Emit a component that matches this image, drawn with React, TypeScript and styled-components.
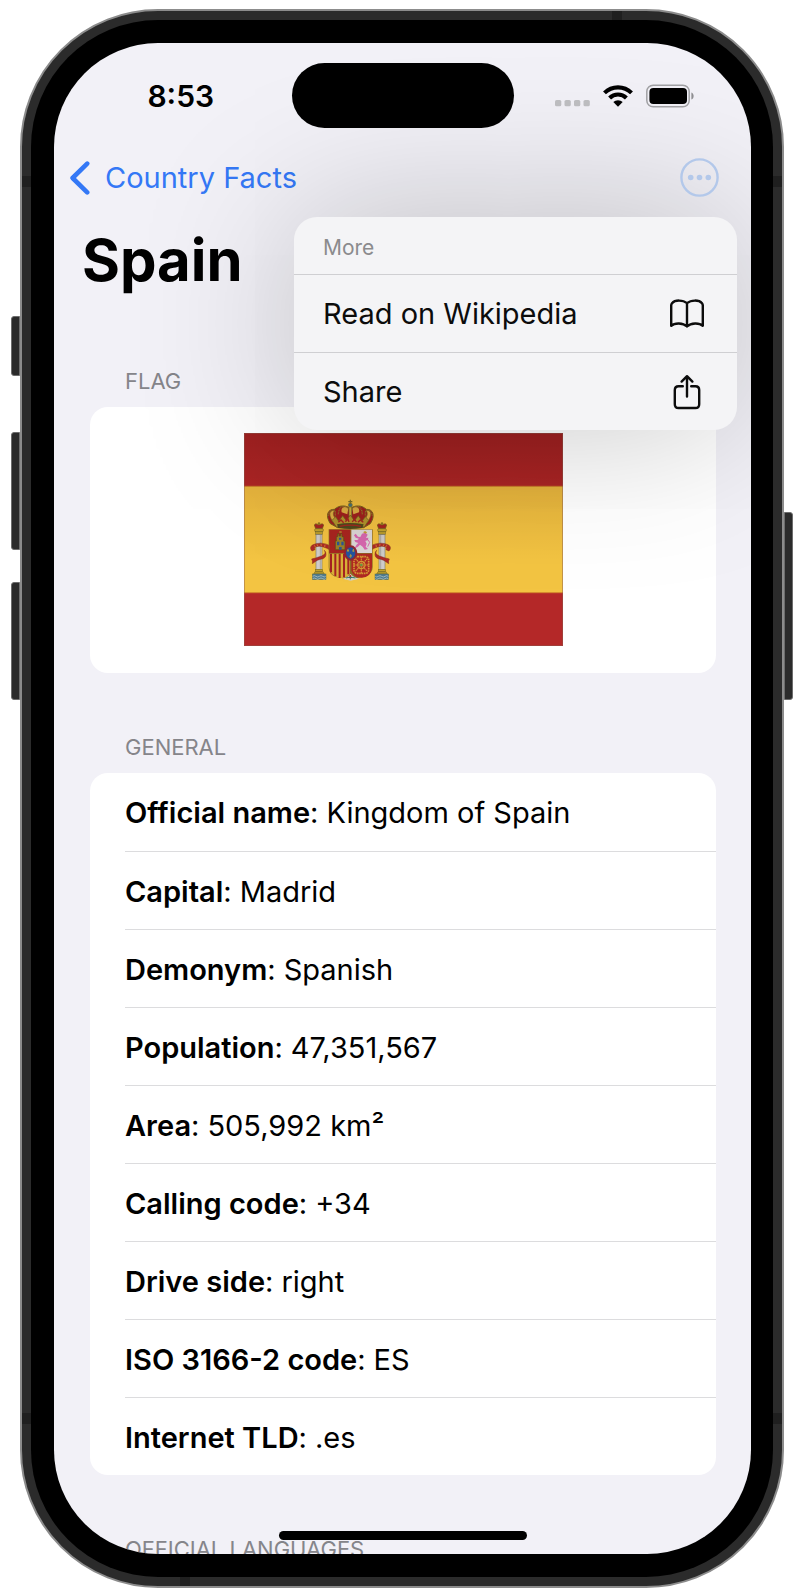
import React from 'react';
import styled, { createGlobalStyle, css } from 'styled-components';

const GlobalStyle = createGlobalStyle`
  *, *::before, *::after { box-sizing: border-box; }
  body {
    margin: 0;
    background: #ffffff;
    color: #000000;
    font-family: Inter, "Liberation Sans", sans-serif;
    font-size: 29px;
    line-height: 38px;
  }
`;

/* ---------- device ---------- */

const Page = styled.main`
  display: grid;
  grid-template-columns: 9px minmax(0, 1fr) 9px;
  padding: 9px 11px 4px;
`;

const Rail = styled.div<{ $side: 'left' | 'right' }>`
  display: flex;
  flex-direction: column;
  align-items: ${p => (p.$side === 'left' ? 'flex-end' : 'flex-start')};
`;

const HardwareKey = styled.span<{ $gap: number; $length: number; $side: 'left' | 'right' }>`
  width: 9px;
  height: ${p => p.$length}px;
  margin-top: ${p => p.$gap}px;
  background: #2b2b2b;
  border: 1px solid #6d6d6d;
  border-radius: ${p => (p.$side === 'left' ? '3px 0 0 3px' : '0 3px 3px 0')};
`;

const Chassis = styled.div`
  position: relative;
  border: 2px solid #8c8c8c;
  border-radius: 138px;
  background: #2b2b2b;
  padding: 9px;
`;

const Bezel = styled.div`
  border-radius: 127px;
  background: #000000;
  padding: 23px 22px 23px 23px;
`;

const Antenna = styled.span<{ $edge: 'left' | 'right' | 'top' | 'bottom'; $at: string }>`
  position: absolute;
  background: #1f1f1f;
  ${p =>
    p.$edge === 'left' || p.$edge === 'right'
      ? css`
          width: 9px;
          height: 11px;
          top: ${p.$at};
        `
      : css`
          width: 10px;
          height: 9px;
          left: ${p.$at};
        `}
  ${p => p.$edge}: 0;
`;

const Screen = styled.div`
  position: relative;
  overflow: hidden;
  border-radius: 104px;
  background: #f2f1f7;
`;

/* ---------- top bars ---------- */

const StatusBar = styled.header`
  display: grid;
  grid-template-columns: minmax(0, 1fr) 222px minmax(0, 1fr);
  align-items: center;
  height: 105px;
`;

const Clock = styled.time`
  position: relative;
  z-index: 3;
  padding-left: 16px;
  text-align: center;
  font-size: 30px;
  font-weight: 600;
`;

const Island = styled.div`
  position: relative;
  z-index: 3;
  height: 65px;
  border-radius: 33px;
  background: #000000;
`;

const StatusIcons = styled.div`
  position: relative;
  z-index: 3;
  display: flex;
  justify-content: flex-end;
  align-items: center;
  gap: 13px;
  padding-right: 57px;
`;

const NavBar = styled.nav`
  position: relative;
  display: flex;
  align-items: center;
  justify-content: space-between;
  height: 59px;
  padding: 0 32px 0 16px;
`;

const BackLink = styled.a`
  position: relative;
  display: flex;
  align-items: center;
  gap: 15px;
  color: #3478f6;
  text-decoration: none;
`;

const MoreButton = styled.button`
  position: relative;
  z-index: 3;
  display: flex;
  padding: 0;
  border: 0;
  background: none;
  color: #b3c8ea;
`;

/* ---------- menu ---------- */

const Menu = styled.div`
  position: absolute;
  z-index: 2;
  top: 69px;
  right: 14px;
  width: 443px;
  border-radius: 23px;
  background: #f4f4f6;
  box-shadow: 0 0 160px rgba(0, 0, 0, 0.22);
`;

const MenuHeading = styled.div`
  padding: 15px 29px 10px;
  color: #8b8b8d;
  font-size: 21px;
  line-height: 32px;
`;

const MenuItem = styled.button`
  display: flex;
  align-items: center;
  justify-content: space-between;
  width: 100%;
  height: 78px;
  padding: 0 29px;
  border: 0;
  border-top: 1px solid #cfcfd2;
  background: none;
  color: #0c0c0c;
  font: inherit;
  text-align: left;
`;

/* ---------- content ---------- */

const Title = styled.h1`
  margin: 0;
  padding: 17px 28px 11px;
  font-size: 58px;
  line-height: 72px;
  font-weight: 700;
`;

const Section = styled.section`
  padding: 0 35px 0 36px;
`;

const SectionHeading = styled.h2`
  margin: 0;
  padding: 60px 35px 12px;
  color: #85858a;
  font-size: 22px;
  line-height: 28px;
  font-weight: 400;
`;

const Card = styled.div`
  overflow: hidden;
  border-radius: 18px;
  background: #ffffff;
`;

const FlagCard = styled(Card)`
  display: flex;
  justify-content: center;
  padding: 26px 0 27px;
`;

const FactList = styled.dl`
  margin: 0;
  padding-left: 35px;
`;

const Fact = styled.div`
  display: flex;
  align-items: center;
  height: 78px;
  padding-top: 2px;
  & + & { border-top: 1px solid #dcdcde; }
`;

const Term = styled.dt`
  font-weight: 600;
  &::after { content: ":"; font-weight: 400; }
`;

const Detail = styled.dd`
  margin: 0 0 0 8px;
`;

const Peek = styled(Section)`
  height: 79px;
  overflow: hidden;
`;

const HomeIndicator = styled.span`
  position: absolute;
  bottom: 14px;
  left: 50%;
  width: 248px;
  height: 9px;
  border-radius: 5px;
  background: #000000;
  transform: translateX(-50%);
`;

/* ---------- drawings ---------- */

const CellularIcon = () => (
  <svg width="35" height="36" viewBox="0 0 35 36" fill="#bcbcbf" aria-hidden="true">
    {[0, 9.5, 19, 28.5].map(x => (
      <rect key={x} x={x} y="22" width="6.3" height="6.3" rx="1.6" />
    ))}
  </svg>
);

const WifiIcon = () => (
  <svg width="30" height="22" viewBox="0 0 30 22" aria-hidden="true">
    <g fill="none" stroke="#000" strokeWidth="4.1">
      <path d="M1.5 7.9A19.2 19.2 0 0 1 28.5 7.9" />
      <path d="M6.6 13A12 12 0 0 1 23.4 13" />
    </g>
    <path d="M15 21.8L10.3 17.1A6.6 6.6 0 0 1 19.7 17.1Z" />
  </svg>
);

const BatteryIcon = () => (
  <svg width="48" height="24" viewBox="0 0 48 24" aria-hidden="true">
    <rect x=".8" y="1.2" width="42.4" height="21.6" rx="6.4" fill="none" stroke="#a0a0a3" strokeWidth="1.5" />
    <rect x="3.4" y="4" width="37.6" height="16" rx="4" />
    <path d="M45.4 8.4c3 1.2 3 6 0 7.2z" fill="#8e8e91" />
  </svg>
);

const ChevronIcon = () => (
  <svg width="20" height="34" viewBox="0 0 20 34" fill="none" stroke="currentColor" strokeWidth="4.6" strokeLinecap="round" strokeLinejoin="round" aria-hidden="true">
    <path d="M17.2 2.6L2.6 17L17.2 31.4" />
  </svg>
);

const EllipsisIcon = () => (
  <svg width="39" height="39" viewBox="0 0 39 39" aria-hidden="true">
    <circle cx="19.5" cy="19.5" r="18.1" fill="none" stroke="currentColor" strokeWidth="2.4" />
    <g fill="currentColor">
      <circle cx="10.7" cy="19.5" r="2.8" />
      <circle cx="19.5" cy="19.5" r="2.8" />
      <circle cx="28.3" cy="19.5" r="2.8" />
    </g>
  </svg>
);

const BookIcon = () => (
  <svg width="42" height="34" viewBox="0 0 42 34" fill="none" stroke="currentColor" strokeWidth="2.4" strokeLinecap="round" strokeLinejoin="round" aria-hidden="true">
    <path d="M21 6.2C17 2.8 9 2.6 6 6.2C5.4 7 5.2 7.4 5.2 8.4V28.8C8.6 25.6 17 25.6 21 29.4C25 25.6 33.4 25.6 36.8 28.8V8.4C36.8 7.4 36.6 7 36 6.2C33 2.6 25 2.8 21 6.2V29.4" />
  </svg>
);

const ShareIcon = () => (
  <svg width="42" height="36" viewBox="0 0 42 36" fill="none" stroke="currentColor" strokeWidth="2.4" strokeLinecap="round" strokeLinejoin="round" aria-hidden="true">
    <path d="M16.8 12.2H12.6Q8.8 12.2 8.8 16V30.2Q8.8 34 12.6 34H29.4Q33.2 34 33.2 30.2V16Q33.2 12.2 29.4 12.2H25.2" />
    <path d="M21 22.5V2.6M15.6 7.6L21 2.2L26.4 7.6" />
  </svg>
);

const Pillar = ({ x, mirror }: { x: number; mirror?: boolean }) => (
  <g transform={`translate(${x} 0)${mirror ? ' scale(-1 1)' : ''}`}>
    <path d="M-14 300L-10 296L0 300L10 296L14 300L10 311H-10Z" fill="#a62622" stroke="#6b5a1a" strokeWidth="2" />
    <circle cx="0" cy="296" r="4" fill="#8f7a22" />
    <rect x="-13" y="311" width="26" height="9" rx="3" fill="#c4a52d" stroke="#6b6425" strokeWidth="1.5" />
    <rect x="-10" y="320" width="20" height="9" fill="#b89c2c" stroke="#6b6425" strokeWidth="1.5" />
    <rect x="-9" y="329" width="18" height="104" fill="#cfcdca" stroke="#77756b" strokeWidth="1.8" />
    <path d="M4 330V432" stroke="#aaa8a3" strokeWidth="3" />
    <rect x="-11" y="433" width="22" height="7" fill="#c4a52d" stroke="#6b6425" strokeWidth="1.5" />
    <path d="M-16 447L-12 440H12L16 447Z" fill="#b89c2c" stroke="#6b6425" strokeWidth="1.5" />
    <rect x="-20" y="447" width="41" height="17" fill="#4d7b92" stroke="#5f6f4a" strokeWidth="1.5" />
    <path d="M-19 454Q-14 450 -9 454T1 454T11 454T20 454M-19 461Q-14 457 -9 461T1 461T11 461T20 461" fill="none" stroke="#c9d3c8" strokeWidth="2" />
    <path d="M34 362Q4 348 -20 360Q-30 368 -21 378L-12 374Q-16 368 -8 365Q8 360 33 375Z" fill="#b02a26" stroke="#7d2a1c" strokeWidth="1.5" />
    <path d="M16 376Q24 386 8 393Q-12 400 -22 402Q-18 408 -20 416Q-4 402 12 401Q24 396 20 382Z" fill="#b02a26" stroke="#7d2a1c" strokeWidth="1.5" />
    <path d="M-14 361L-10 367M-6 358L-3 364M6 357L7 363M18 359L17 366" stroke="#d8a53a" strokeWidth="2" />
  </g>
);

const CoatOfArms = () => (
  <g transform="translate(-13 -8) scale(.33333)">
    <Pillar x={264} />
    <Pillar x={453} mirror />

    <path d="M298 296C282 272 290 252 310 253C325 240 342 240 358 250C374 240 392 240 406 253C426 252 434 272 418 296L398 308H320Z" fill="#9f211e" stroke="#77671f" strokeWidth="3" />
    <path d="M307 292C288 266 298 254 311 256C302 268 310 280 323 287Z" fill="#ddb043" stroke="#77671f" strokeWidth="2" />
    <path d="M409 292C428 266 418 254 405 256C414 268 406 280 393 287Z" fill="#ddb043" stroke="#77671f" strokeWidth="2" />
    <path d="M332 262C328 246 342 242 352 250L349 268Z M384 262C388 246 374 242 364 250L367 268Z" fill="#ddb043" />
    <path d="M292 272C298 248 318 250 312 274M322 268C322 238 354 238 355 260M394 268C394 238 362 238 361 260M424 272C418 248 398 250 404 274" fill="none" stroke="#8f7d28" strokeWidth="4" strokeDasharray="3 2" />
    <path d="M354 245H362V274H354Z" fill="#d2b13a" stroke="#6d7431" strokeWidth="2" />
    <circle cx="358" cy="240" r="6" fill="#3e7483" stroke="#87762a" strokeWidth="2" />
    <path d="M358 224V238M352 230H364" stroke="#77702a" strokeWidth="3.5" />
    <path d="M303 286L314 275L323 289L335 272L346 287L358 270L370 287L382 272L393 289L403 275L413 286L400 306Q358 298 316 306Z" fill="#b0962d" stroke="#6b5d1c" strokeWidth="2" />
    <path d="M322 292L330 285L338 293M343 290L351 282L354 291M364 291L370 282L376 291M381 292L388 285L397 292" fill="none" stroke="#a62420" strokeWidth="4" />
    <path d="M318 298Q358 290 398 298L394 309Q358 315 322 309Z" fill="#4d4a1d" />
    <path d="M326 304Q358 297 390 304" fill="none" stroke="#a5271f" strokeWidth="4" />

    <path d="M293 313H425V426C425 452 396 458 384 458L359 466L330 458C310 458 293 448 293 426Z" fill="#8d6e26" />
    <path d="M295 314H358V384H295Z" fill="#a92520" />
    <path d="M361 314H423V384H361Z" fill="#dcd9d8" />
    <path d="M295 386H357V446Q348 460 326 459Q295 452 295 426Z" fill="#d8b038" />
    <path d="M300 386V442M313 386V453M326 386V459M339 386V457M352 386V448" stroke="#a62422" strokeWidth="6" />
    <path d="M361 386H423V426Q420 458 392 458Q366 458 361 436Z" fill="#b02a22" />

    <path d="M313 374V348H316V335H320V326H324V333H329V326H333V335H338V348H342V374Z" fill="#9b8129" stroke="#5e4c19" strokeWidth="2" />
    <path d="M318 350H325V361H318ZM331 350H338V361H331ZM324 366H332V374H324ZM324 338H331V344H324Z" fill="#2c5796" />
    <path d="M325 321H332" stroke="#b79a32" strokeWidth="4" />

    <path d="M374 326L381 335L388 336L393 326L403 323L410 329L405 339L412 338L411 345L403 348L407 356L404 365L411 372L401 374L395 365L387 359L380 366L371 370L376 360L382 354L373 351L370 345L379 345L384 341L374 338L369 331Z" fill="#d768b0" />
    <path d="M410 365L416 352L408 341" fill="none" stroke="#d768b0" strokeWidth="3" />
    <path d="M396 322L402 318L408 322L405 326Z" fill="#c49b31" />

    <g fill="none" stroke="#d49a35">
      <rect x="369" y="395" width="44" height="50" rx="10" strokeWidth="5" strokeDasharray="5 2" />
      <path d="M391 394V447M368 420H414M373 401L409 439M409 401L373 439" strokeWidth="3.5" strokeDasharray="5 1.5" />
      <circle cx="391" cy="420" r="11" strokeWidth="3.5" />
    </g>
    <circle cx="391" cy="420" r="4" fill="#6a9244" />

    <path d="M335 461Q354 455 359 446Q364 455 384 461L359 467Z" fill="#d6d2c4" />
    <path d="M345 459L358 456L373 459M358 452V463" stroke="#3e857a" strokeWidth="3" />
    <circle cx="358" cy="453" r="3" fill="#b42a24" />
    <ellipse cx="359" cy="384" rx="17" ry="20" fill="#2354a0" stroke="#8f2733" strokeWidth="6" />
    <path d="M351 372V381M348 378Q351 373 354 378M367 372V381M364 378Q367 373 370 378M359 388V398M355 394Q359 387 363 394" fill="none" stroke="#b79c3c" strokeWidth="3" />
  </g>
);

const SpainFlag = () => (
  <svg width="319" height="213" viewBox="0 0 319 213" role="img" aria-label="Flag of Spain">
    <defs>
      <linearGradient id="shade" x1="0" y1="0" x2="0" y2="1">
        <stop offset="0" stopColor="#4a0000" stopOpacity=".22" />
        <stop offset=".25" stopColor="#4a0000" stopOpacity=".1" />
        <stop offset=".6" stopColor="#4a0000" stopOpacity="0" />
      </linearGradient>
    </defs>
    <rect width="319" height="213" fill="#b42828" />
    <rect y="53" width="319" height="107" fill="#f3c442" />
    <path d="M0 53.3H319M0 159.7H319" stroke="#cf7d2c" />
    <CoatOfArms />
    <rect width="319" height="213" fill="url(#shade)" />
    <rect x=".5" y=".5" width="318" height="212" fill="none" stroke="#8a5a50" strokeOpacity=".45" />
  </svg>
);

/* ---------- data ---------- */

const facts: [string, string][] = [
  ['Official name', 'Kingdom of Spain'],
  ['Capital', 'Madrid'],
  ['Demonym', 'Spanish'],
  ['Population', '47,351,567'],
  ['Area', '505,992 km²'],
  ['Calling code', '+34'],
  ['Drive side', 'right'],
  ['ISO 3166-2 code', 'ES'],
  ['Internet TLD', '.es'],
];

export default function App() {
  return (
    <>
      <GlobalStyle />
      <Page>
        <Rail $side="left">
          <HardwareKey $side="left" $gap={307} $length={60} />
          <HardwareKey $side="left" $gap={56} $length={118} />
          <HardwareKey $side="left" $gap={32} $length={118} />
        </Rail>
        <Chassis>
          <Antenna $edge="left" $at="165px" />
          <Antenna $edge="right" $at="165px" />
          <Antenna $edge="left" $at="calc(100% - 173px)" />
          <Antenna $edge="right" $at="calc(100% - 173px)" />
          <Antenna $edge="top" $at="calc(100% - 170px)" />
          <Antenna $edge="bottom" $at="158px" />
          <Bezel>
            <Screen>
              <StatusBar>
                <Clock>8:53</Clock>
                <Island />
                <StatusIcons>
                  <CellularIcon />
                  <WifiIcon />
                  <BatteryIcon />
                </StatusIcons>
              </StatusBar>
              <NavBar>
                <BackLink href="#countries">
                  <ChevronIcon />
                  Country Facts
                </BackLink>
                <MoreButton type="button" aria-label="More" aria-haspopup="menu" aria-expanded="true">
                  <EllipsisIcon />
                </MoreButton>
                <Menu role="menu" aria-label="More">
                  <MenuHeading>More</MenuHeading>
                  <MenuItem type="button" role="menuitem">
                    Read on Wikipedia
                    <BookIcon />
                  </MenuItem>
                  <MenuItem type="button" role="menuitem">
                    Share
                    <ShareIcon />
                  </MenuItem>
                </Menu>
              </NavBar>
              <Title>Spain</Title>
              <Section>
                <SectionHeading>FLAG</SectionHeading>
                <FlagCard>
                  <SpainFlag />
                </FlagCard>
              </Section>
              <Section>
                <SectionHeading>GENERAL</SectionHeading>
                <Card>
                  <FactList>
                    {facts.map(([term, detail]) => (
                      <Fact key={term}>
                        <Term>{term}</Term>
                        <Detail>{detail}</Detail>
                      </Fact>
                    ))}
                  </FactList>
                </Card>
              </Section>
              <Peek>
                <SectionHeading>OFFICIAL LANGUAGES</SectionHeading>
              </Peek>
              <HomeIndicator />
            </Screen>
          </Bezel>
        </Chassis>
        <Rail $side="right">
          <HardwareKey $side="right" $gap={503} $length={188} />
        </Rail>
      </Page>
    </>
  );
}
